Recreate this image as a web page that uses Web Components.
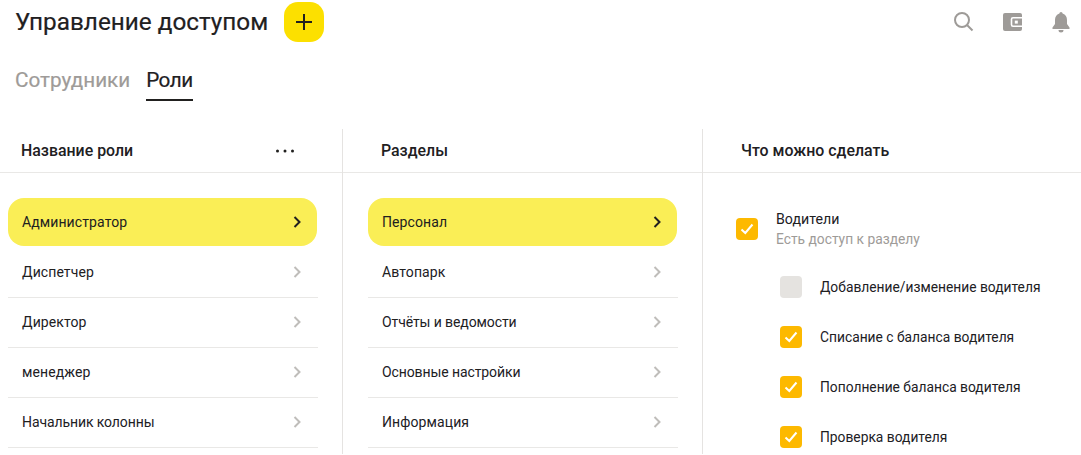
<!DOCTYPE html>
<html lang="ru">
<head>
<meta charset="utf-8">
<title>Управление доступом</title>
<style>
  html, body { margin: 0; height: 455px; overflow: hidden; background: #fff; }
  body { font-family: Roboto, "Liberation Sans", sans-serif; color: #21201f; }
</style>
</head>
<body>
<access-page></access-page>
<script>
class TopBar extends HTMLElement {
  constructor() {
    super();
    this.attachShadow({ mode: "open" }).innerHTML = `
      <style>
        :host { display: flex; align-items: center; height: 44px; padding: 0 11px 0 15px; }
        h1 { margin: 0; font-size: 24.300px; font-weight: 400; line-height: 44px; width: 253px; white-space: nowrap; -webkit-text-stroke: .2px #21201f; }
        button { width: 40px; height: 40px; margin-left: 16px; padding: 0; border: 0; border-radius: 14px; background: #fce000; display: flex; align-items: center; justify-content: center; }
        .icons { margin-left: auto; display: flex; gap: 29px; align-items: center; }
        svg { display: block; }
      </style>
      <h1><slot></slot></h1>
      <button>
        <svg width="16" height="16" viewBox="0 0 16 16"><path d="M8 0v16M0 8h16" stroke="#21201f" stroke-width="2"/></svg>
      </button>
      <div class="icons">
        <svg width="20" height="20" viewBox="0 0 20 20" fill="none" stroke="#9e9b98" stroke-width="2"><circle cx="8" cy="8" r="7"/><path d="M13 13l5.500 5.500"/></svg>
        <svg width="20" height="20" viewBox="0 0 20 20"><rect x="0" y="1" width="19" height="18" rx="2" fill="#9e9b98"/><path d="M19 5.800h-9a1.500 1.500 0 0 0-1.500 1.500v5.400a1.500 1.500 0 0 0 1.500 1.500h9" fill="none" stroke="#fff" stroke-width="1.600"/><rect x="11.800" y="8.600" width="3" height="3" fill="#fff"/></svg>
        <svg width="18" height="22" viewBox="1 0 18 22"><path fill="#9e9b98" d="M10 1a1.600 1.600 0 0 1 1.600 1.600C14.600 3.400 16 6 16 9v4l2.500 3.400V18h-17v-1.600L4 13V9c0-3 1.400-5.600 4.400-6.400A1.600 1.600 0 0 1 10 1zM7.500 19h5a2.500 2.500 0 0 1-5 0z"/></svg>
      </div>`;
  }
}

class TabBar extends HTMLElement {
  constructor() {
    super();
    this.attachShadow({ mode: "open" }).innerHTML = `
      <style>
        :host { display: flex; align-items: flex-start; gap: 16px; height: 58px; padding: 0 15px; font-size: 20.700px; line-height: 24px; box-sizing: border-box; -webkit-text-stroke: .2px currentColor; }
      </style>
      <slot></slot>`;
  }
}

class TabItem extends HTMLElement {
  constructor() {
    super();
    this.attachShadow({ mode: "open" }).innerHTML = `
      <style>
        :host { display: block; height: 33px; padding-top: 24px; color: #9e9b98; }
        :host([active]) { color: #21201f; letter-spacing: -.5px; box-shadow: inset 0 -2px 0 #21201f; }
      </style>
      <slot></slot>`;
  }
}

class RoleColumns extends HTMLElement {
  constructor() {
    super();
    this.attachShadow({ mode: "open" }).innerHTML = `
      <style>
        :host { display: grid; grid-template-columns: 343px 360px 1fr; margin-top: 27px; }
      </style>
      <slot></slot>`;
  }
}

class RoleColumn extends HTMLElement {
  constructor() {
    super();
    const title = this.getAttribute("title-text");
    const more = this.hasAttribute("more");
    this.attachShadow({ mode: "open" }).innerHTML = `
      <style>
        :host { display: block; height: 325px; overflow: hidden; border-right: 1px solid #e5e3e1; box-sizing: border-box; }
        :host(:last-child) { border-right: 0; }
        header { display: flex; align-items: center; justify-content: space-between; height: 43px; padding: 0 48px 0 var(--head-pad, 21px); border-bottom: 1px solid #e9e8e6; font-size: 15.900px; font-weight: 500; }
        .list { padding: 25px 24px 0 8px; }
        :host(:not(:first-child)) .list { padding-left: 25px; padding-right: 24px; }
        svg { display: block; }
      </style>
      <header>
        <span>${title}</span>
        ${more ? `<svg width="18" height="4" viewBox="0 0 18 4" fill="#21201f"><circle cx="1.500" cy="2" r="1.500"/><circle cx="9" cy="2" r="1.500"/><circle cx="16.500" cy="2" r="1.500"/></svg>` : ""}
      </header>
      <div class="list"><slot></slot></div>`;
  }
}

class RoleRow extends HTMLElement {
  constructor() {
    super();
    const active = this.hasAttribute("active");
    this.attachShadow({ mode: "open" }).innerHTML = `
      <style>
        :host { display: flex; align-items: center; justify-content: space-between; height: 50px; padding: 0 17px 2px 14px; box-sizing: border-box; font-size: 14px; letter-spacing: .1px; border-bottom: 1px solid #e9e8e6; }
        :host([active]) { height: 48px; margin: 0 1px 2px 0; padding: 0 16px 0 14px; background: #faee56; border: 0; border-radius: 16px; }
        :host([tight]) { letter-spacing: -.1px; }
        svg { display: block; }
      </style>
      <slot></slot>
      <svg width="8" height="12" viewBox="0 0 8 12" fill="none" stroke="${active ? "#21201f" : "#bfbdba"}" stroke-width="2"><path d="M1.500 1l5 5-5 5"/></svg>`;
  }
}

class CheckItem extends HTMLElement {
  constructor() {
    super();
    const on = this.hasAttribute("checked");
    this.attachShadow({ mode: "open" }).innerHTML = `
      <style>
        :host { display: flex; align-items: center; gap: 18px; height: 50px; font-size: 13.800px; white-space: nowrap; }
        :host([sub]) { margin-left: 44px; }
        :host([hint]) { height: 62px; margin-bottom: 2px; font-size: 14.200px; }
        .box { flex: none; width: 22px; height: 22px; border-radius: 4px; background: #e5e3e0; display: flex; align-items: center; justify-content: center; }
        .box.on { background: #fdb900; }
        svg { display: block; }
        .hint { color: #9e9b98; margin-top: 2px; font-size: 13.800px; line-height: 18px; }
        .txt { line-height: 18px; margin-top: -1px; }
        :host([sub]) .txt { margin-top: 0; }
      </style>
      <div class="box ${on ? "on" : ""}">
        ${on ? `<svg width="14" height="12" viewBox="0 0 14 12" fill="none" stroke="#fff" stroke-width="2"><path d="M1.500 6.500l3.800 3.500 7.200-8.500"/></svg>` : ""}
      </div>
      <div class="txt"><slot></slot>${this.hasAttribute("hint") ? `<div class="hint">${this.getAttribute("hint")}</div>` : ""}</div>`;
  }
}

class AccessPage extends HTMLElement {
  constructor() {
    super();
    this.attachShadow({ mode: "open" }).innerHTML = `
      <style>
        :host { display: block; }
        .perm { padding-left: 8px; }
      </style>
      <top-bar>Управление доступом</top-bar>
      <tab-bar>
        <tab-item>Сотрудники</tab-item>
        <tab-item active>Роли</tab-item>
      </tab-bar>
      <role-columns>
        <role-column title-text="Название роли" more>
          <role-row active>Администратор</role-row>
          <role-row>Диспетчер</role-row>
          <role-row>Директор</role-row>
          <role-row>менеджер</role-row>
          <role-row tight>Начальник колонны</role-row>
        </role-column>
        <role-column title-text="Разделы" style="--head-pad:38px">
          <role-row active>Персонал</role-row>
          <role-row>Автопарк</role-row>
          <role-row tight>Отчёты и ведомости</role-row>
          <role-row tight>Основные настройки</role-row>
          <role-row>Информация</role-row>
        </role-column>
        <role-column title-text="Что можно сделать" style="--head-pad:38px">
          <div class="perm">
            <check-item checked hint="Есть доступ к разделу">Водители</check-item>
            <check-item sub>Добавление/изменение водителя</check-item>
            <check-item sub checked>Списание с баланса водителя</check-item>
            <check-item sub checked>Пополнение баланса водителя</check-item>
            <check-item sub checked>Проверка водителя</check-item>
          </div>
        </role-column>
      </role-columns>`;
  }
}

customElements.define("top-bar", TopBar);
customElements.define("tab-bar", TabBar);
customElements.define("tab-item", TabItem);
customElements.define("role-columns", RoleColumns);
customElements.define("role-column", RoleColumn);
customElements.define("role-row", RoleRow);
customElements.define("check-item", CheckItem);
customElements.define("access-page", AccessPage);
</script>
</body>
</html>
